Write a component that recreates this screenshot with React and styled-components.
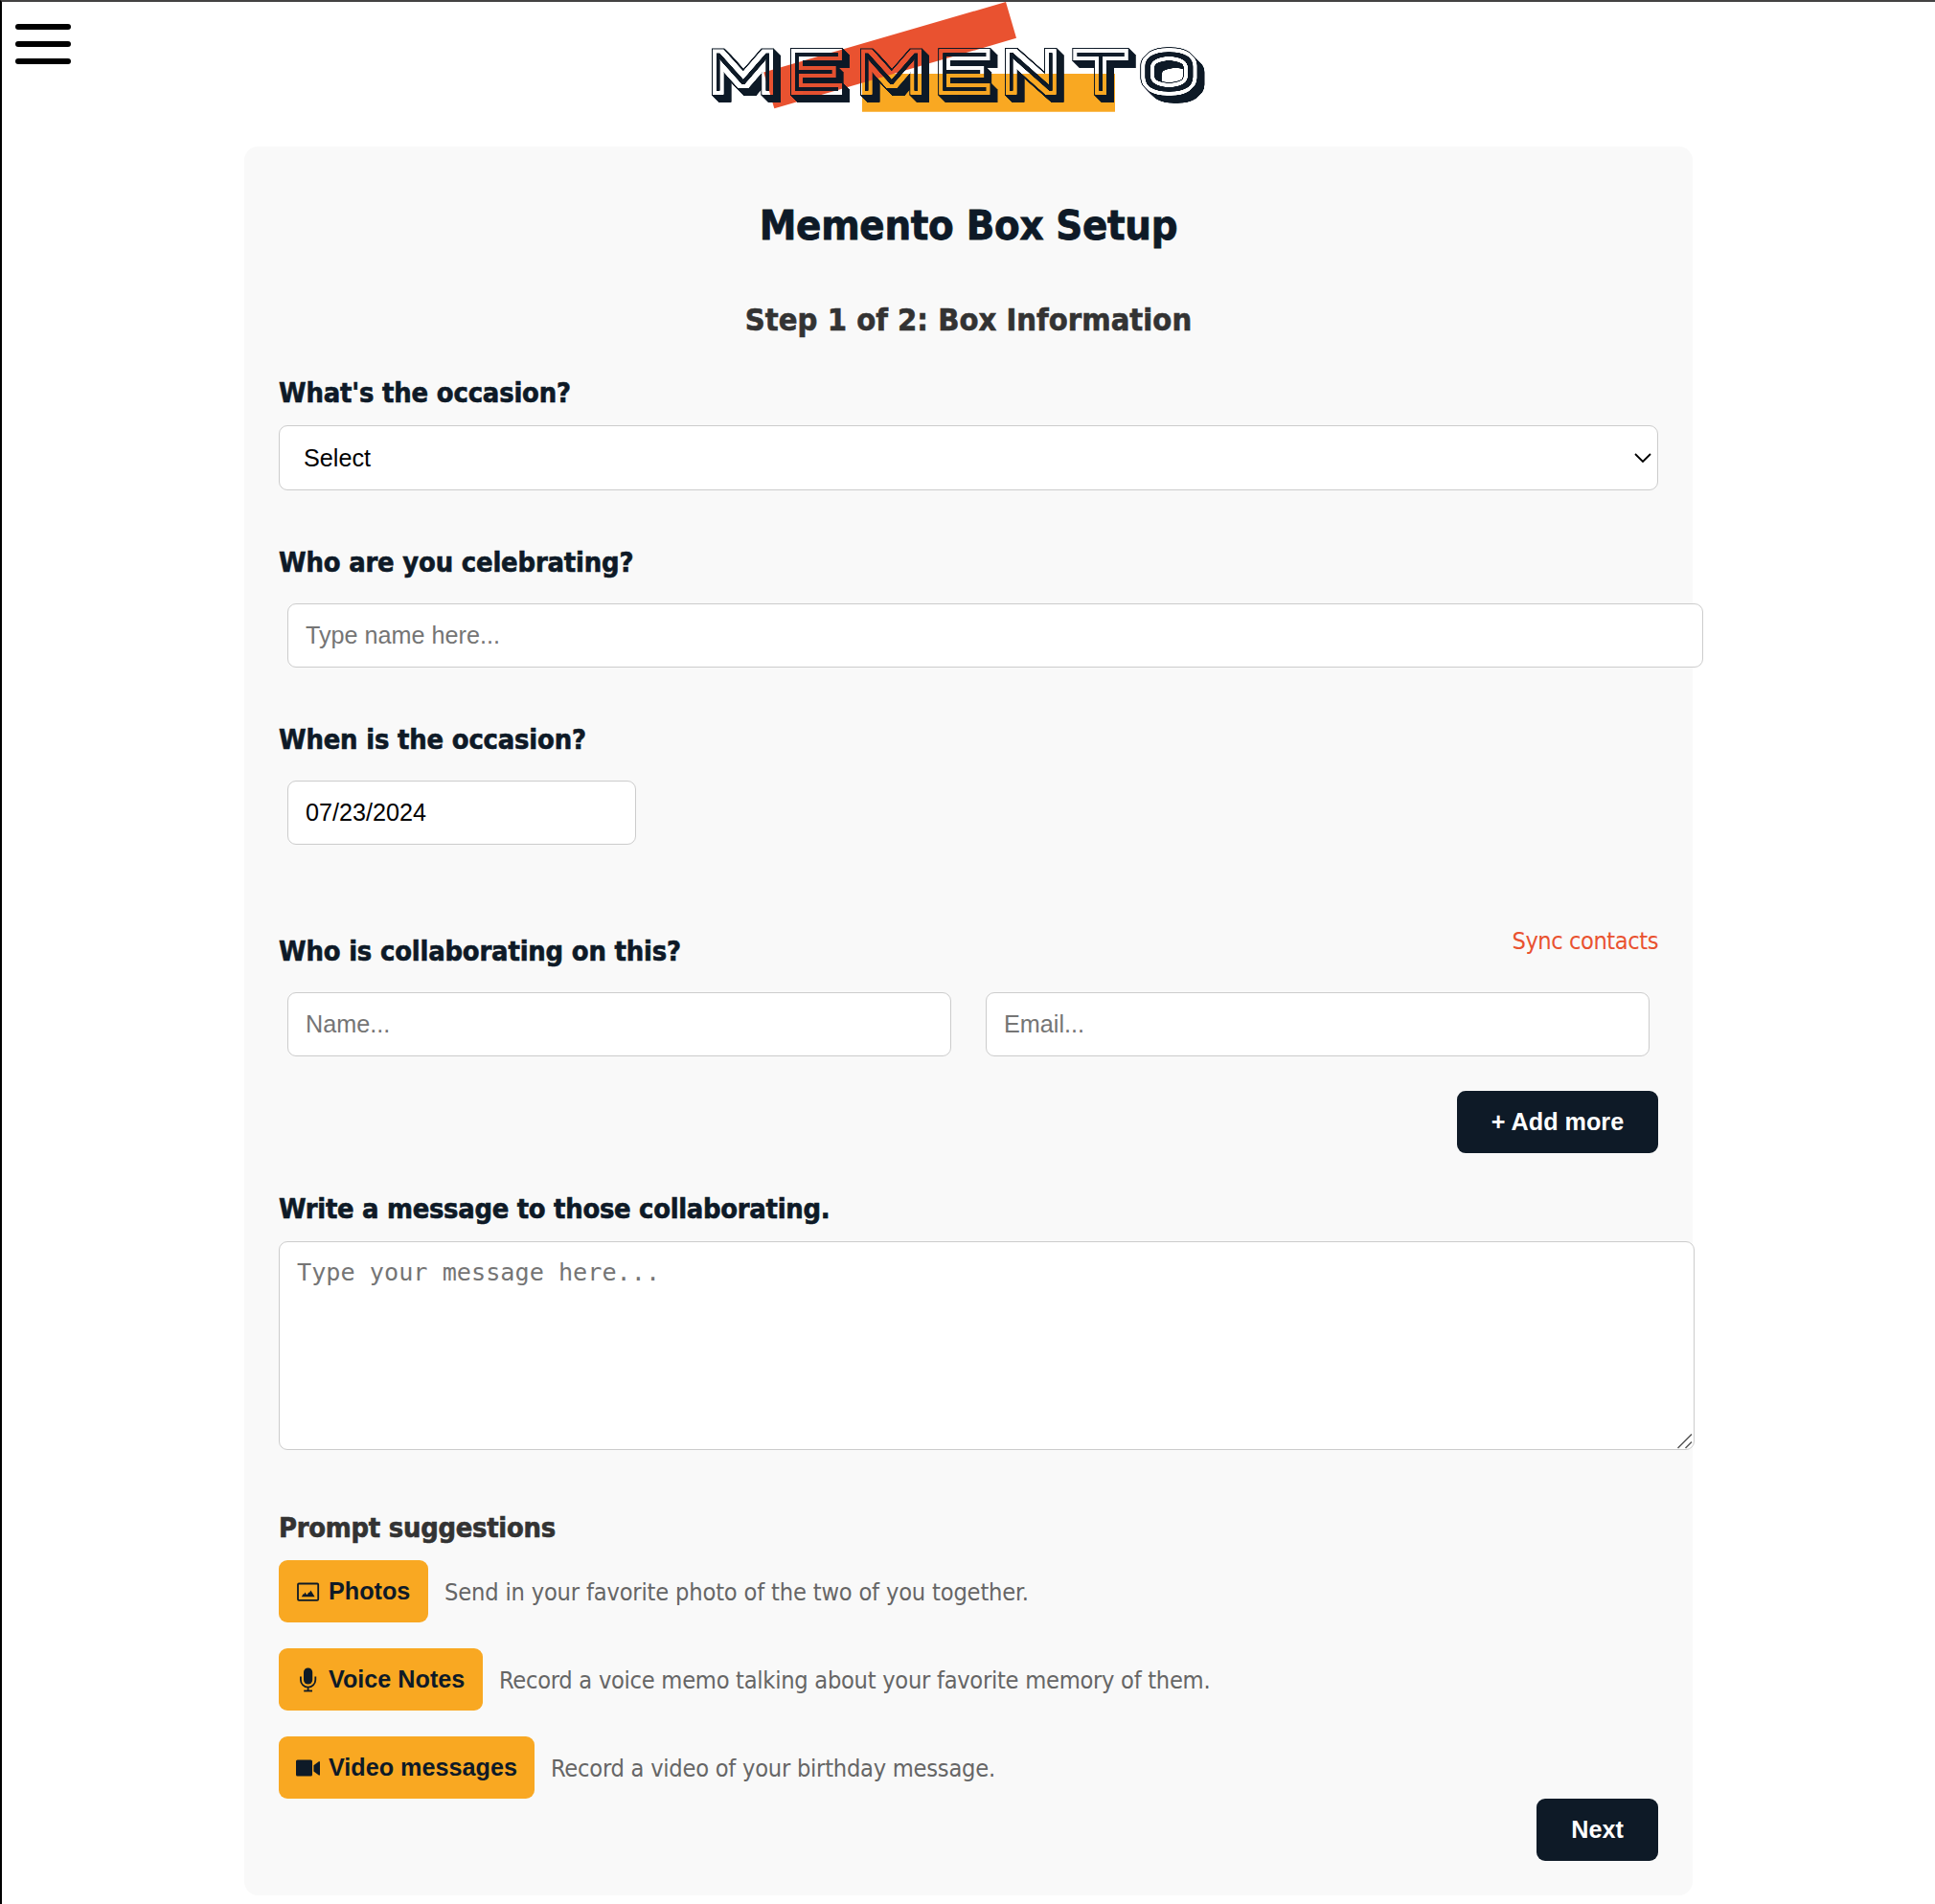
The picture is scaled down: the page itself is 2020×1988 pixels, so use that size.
import React from 'react';
import styled, { createGlobalStyle } from 'styled-components';

const navy = '#0e1a27';
const orange = '#e95230';
const amber = '#f9a822';
const heading = '"DejaVu Sans Condensed", "DejaVu Sans", sans-serif';
const control = '"Liberation Sans", Arial, sans-serif';

const GlobalStyle = createGlobalStyle`
  *, *::before, *::after { box-sizing: border-box; }
  body { margin: 0; background: #fff; font-family: ${heading}; font-stretch: condensed; }
`;

const Page = styled.div`
  min-height: 1988px;
  border-top: 2px solid #444243;
  border-left: 2px solid #000;
`;

const Header = styled.header`
  display: flex;
  align-items: flex-start;
  height: 151px;
  padding-left: 14px;
`;

const MenuButton = styled.button`
  display: flex;
  flex-direction: column;
  gap: 12px;
  width: 58px;
  margin-top: 23px;
  padding: 0;
  border: 0;
  background: none;
`;

const MenuBar = styled.span`
  height: 6px;
  border-radius: 3px;
  background: #000;
`;

const LogoArt = styled.svg`
  display: block;
  width: 540px;
  height: 128px;
  margin-left: 656px;
`;

const Card = styled.main`
  width: 1512px;
  margin: 0 auto;
  padding: 56px 36px 36px;
  border-radius: 14.4px;
  background: #f9f9f9;
`;

const Title = styled.h1`
  margin: 0 0 53px;
  color: ${navy};
  font-size: 43.2px;
  line-height: 52px;
  letter-spacing: -0.3px;
  -webkit-text-stroke: 0.8px;
  text-align: center;
`;

const StepTitle = styled.h2`
  margin: 0 0 38px;
  color: #333;
  font-size: 32.4px;
  line-height: 40px;
  letter-spacing: 0.03px;
  -webkit-text-stroke: 0.6px;
  text-align: center;
`;

const Field = styled.section`
  margin-bottom: ${(p) => p.$after}px;
`;

const Label = styled.label`
  display: block;
  margin: 0 0 ${(p) => p.$gap ?? 25}px;
  color: ${(p) => p.$color ?? navy};
  font-size: 28.8px;
  font-weight: bold;
  line-height: 36px;
  letter-spacing: ${(p) => p.$track ?? -0.17}px;
  -webkit-text-stroke: 0.6px;
`;

const SelectBox = styled.div`
  position: relative;
  height: 68px;
`;

const Select = styled.select`
  appearance: none;
  width: 100%;
  height: 68px;
  padding: 0 25px;
  border: 1px solid #ccc;
  border-radius: 9px;
  background: #fff;
  color: #000;
  font: 25.2px ${control};
`;

const Chevron = styled.svg`
  position: absolute;
  top: 27px;
  right: 6px;
  width: 20px;
  height: 14px;
  pointer-events: none;
`;

const Input = styled.input`
  display: block;
  width: ${(p) => p.$width}px;
  height: 67px;
  margin: 0 9px;
  padding: 0 18px;
  border: 1px solid #ccc;
  border-radius: 9px;
  background: #fff;
  color: #000;
  font: 25.2px ${control};
  &::placeholder { color: #757575; opacity: 1; }
`;

const CollaboratorHead = styled.div`
  display: flex;
  justify-content: space-between;
  align-items: flex-start;
  ${Label} { margin-top: 10px; }
`;

const SyncLink = styled.a`
  color: ${orange};
  font-size: 25.2px;
  line-height: 36px;
  letter-spacing: -0.45px;
`;

const Collaborator = styled.div`
  display: flex;
  gap: 18px;
  margin-bottom: 36px;
`;

const Actions = styled.div`
  display: flex;
  justify-content: flex-end;
`;

const DarkButton = styled.button`
  width: ${(p) => p.$width}px;
  height: 65px;
  padding: 0;
  border: 0;
  border-radius: 9px;
  background: ${navy};
  color: #fff;
  font: bold 25.2px ${control};
`;

const MessageBox = styled.div`
  position: relative;
  width: 1478px;
  height: 218px;
`;

const Message = styled.textarea`
  display: block;
  width: 100%;
  height: 100%;
  padding: 17px 18px;
  border: 1px solid #ccc;
  border-radius: 9px;
  background: #fff;
  resize: none;
  font: 25.2px/30px "DejaVu Sans Mono", monospace;
  &::placeholder { color: #757575; opacity: 1; }
`;

const Grip = styled.svg`
  position: absolute;
  right: 2px;
  bottom: 1px;
  width: 16px;
  height: 16px;
`;

const Prompts = styled.div`
  display: flex;
  flex-direction: column;
  gap: 27px;
`;

const Prompt = styled.div`
  display: flex;
  gap: 17px;
`;

const PromptButton = styled.button`
  display: flex;
  align-items: center;
  gap: 9px;
  width: ${(p) => p.$width}px;
  height: 65px;
  padding: 0 0 0 18px;
  border: 0;
  border-radius: 9px;
  background: ${amber};
  color: ${navy};
  font: bold 25.2px ${control};
  white-space: nowrap;
`;

const PromptIcon = styled.svg`
  flex: none;
  width: 25px;
  height: 26px;
`;

const PromptText = styled.p`
  margin: 0;
  padding-top: 16px;
  color: #666;
  font-size: 25.2px;
  line-height: 36px;
  letter-spacing: ${(p) => p.$track}px;
`;

const letters = [
  ['M', 740.3, 70.5],
  ['E', 819.1, 61],
  ['M', 895.3, 70.5],
  ['E', 973.5, 61],
  ['N', 1046.1, 60.7],
  ['T', 1124.1, 50.1],
];

/* Grows the hairline source by each [rx, ry] box and merges the results. */
const Grow = ({ name, boxes }) => (
  <>
    {boxes.map((b) => (
      <feMorphology key={b} in="hair" operator="dilate" radius={b} result={`${name}-${b}`} />
    ))}
    <feMerge result={name}>
      {boxes.map((b) => (
        <feMergeNode key={b} in={`${name}-${b}`} />
      ))}
    </feMerge>
  </>
);

const InlineShadow = ({ id, band, face }) => (
  <filter id={id} filterUnits="userSpaceOnUse" x="730" y="30" width="540" height="95" colorInterpolationFilters="sRGB">
    <feComponentTransfer in="SourceGraphic" result="thin">
      <feFuncA type="linear" slope="2" intercept="0" />
    </feComponentTransfer>
    <feOffset in="thin" dx="0" dy="1" result="thin2" />
    <feMerge result="hair"><feMergeNode in="thin" /><feMergeNode in="thin2" /></feMerge>
    <feMorphology in="hair" operator="dilate" radius="1" result="core" />
    <Grow name="band" boxes={band} />
    <Grow name="face" boxes={face} />
    <feOffset in="face" dx="1" dy="1" result="s1" />
    <feMerge result="m1"><feMergeNode in="face" /><feMergeNode in="s1" /></feMerge>
    <feOffset in="m1" dx="2" dy="2" result="s2" />
    <feMerge result="m2"><feMergeNode in="m1" /><feMergeNode in="s2" /></feMerge>
    <feOffset in="m2" dx="4" dy="4" result="s3" />
    <feMerge result="solid"><feMergeNode in="m2" /><feMergeNode in="s3" /></feMerge>
    <feComposite in="solid" in2="band" operator="out" result="shell" />
    <feMerge><feMergeNode in="shell" /><feMergeNode in="core" /></feMerge>
  </filter>
);

function Logo() {
  return (
    <LogoArt viewBox="730 2 540 128" role="img" aria-label="Memento">
      <defs>
        <InlineShadow id="inline-square" band={['5 5']} face={['6 6']} />
        <InlineShadow
          id="inline-round"
          band={['5 2', '4 3', '3 4', '2 5']}
          face={['6 2', '5 3', '4 4', '3 5', '2 6']}
        />
      </defs>
      <polygon points="900,77 1164,77 1164,116.7 900,116.7" fill={amber} />
      <polygon points="1050,2 1061,39.8 808.3,113.3 797.2,75.6" fill={orange} />
      <g filter="url(#inline-square)">
        <text y="93" fontFamily="Lato, sans-serif" fontWeight="100" fontSize="52.8" fill={navy}>
          {letters.map(([ch, x, w], i) => (
            <tspan key={i} x={x} textLength={w} lengthAdjust="spacingAndGlyphs">{ch}</tspan>
          ))}
        </text>
      </g>
      <g filter="url(#inline-round)">
        <text x="1189.4" y="93" textLength="61.8" lengthAdjust="spacingAndGlyphs" fontFamily="Roboto, sans-serif" fontWeight="100" fontSize="52.4" fill={navy}>O</text>
      </g>
    </LogoArt>
  );
}

const PhotoIcon = () => (
  <PromptIcon viewBox="0 0 25 26">
    <rect x="2" y="4.5" width="21.2" height="17.3" rx="1" fill="none" stroke={navy} strokeWidth="1.8" />
    <path d="M5.8 18.2 L7.6 15.2 L8.5 15.6 L9.4 13.4 L11 16 L12.2 15.6 L13.2 13.6 L14 14 L15.4 11.6 L19.6 18.2 Z" fill={navy} />
  </PromptIcon>
);

const MicIcon = () => (
  <PromptIcon viewBox="0 0 25 26">
    <rect x="8" y="0.5" width="9.2" height="17" rx="4.6" fill={navy} />
    <path d="M4.9 9.5 V12.9 A7.7 7.7 0 0 0 20.3 12.9 V9.5 M12.6 20 V24.5" fill="none" stroke={navy} strokeWidth="1.8" />
    <path d="M8.2 23.6 H17 V25.4 H8.2 Z" fill={navy} />
  </PromptIcon>
);

const VideoIcon = () => (
  <PromptIcon viewBox="0 0 25 26">
    <rect x="0" y="4.5" width="17" height="17" rx="1.6" fill={navy} />
    <path d="M25 6.2 V20.5 H23.8 L18.4 16.4 V10.2 L23.8 6.2 Z" fill={navy} />
  </PromptIcon>
);

const prompts = [
  { name: 'Photos', width: 156, Icon: PhotoIcon, track: -0.18, text: 'Send in your favorite photo of the two of you together.' },
  { name: 'Voice Notes', width: 213, Icon: MicIcon, track: -0.28, text: 'Record a voice memo talking about your favorite memory of them.' },
  { name: 'Video messages', width: 267, Icon: VideoIcon, track: -0.25, text: 'Record a video of your birthday message.' },
];

export default function App() {
  return (
    <Page>
      <GlobalStyle />
      <Header>
        <MenuButton aria-label="Menu">
          <MenuBar />
          <MenuBar />
          <MenuBar />
        </MenuButton>
        <Logo />
      </Header>
      <Card>
        <Title>Memento Box Setup</Title>
        <StepTitle>Step 1 of 2: Box Information</StepTitle>
        <Field $after={57}>
          <Label $gap={16}>What's the occasion?</Label>
          <SelectBox>
            <Select defaultValue="">
              <option value="">Select</option>
            </Select>
            <Chevron viewBox="0 0 20 14">
              <path d="M2 3 L10 11 L18 3" fill="none" stroke="#000" strokeWidth="1.8" />
            </Chevron>
          </SelectBox>
        </Field>
        <Field $after={57}>
          <Label>Who are you celebrating?</Label>
          <Input $width={1478} placeholder="Type name here..." />
        </Field>
        <Field $after={83}>
          <Label>When is the occasion?</Label>
          <Input $width={364} defaultValue="07/23/2024" />
        </Field>
        <Field $after={40}>
          <CollaboratorHead>
            <Label>Who is collaborating on this?</Label>
            <SyncLink>Sync contacts</SyncLink>
          </CollaboratorHead>
          <Collaborator>
            <Input $width={693} placeholder="Name..." />
            <Input $width={693} placeholder="Email..." />
          </Collaborator>
          <Actions>
            <DarkButton $width={210}>+ Add more</DarkButton>
          </Actions>
        </Field>
        <Field $after={63}>
          <Label $gap={16} $track={-0.28}>Write a message to those collaborating.</Label>
          <MessageBox>
            <Message placeholder="Type your message here..." />
            <Grip viewBox="0 0 16 16">
              <path d="M0.5 15 L15 0.5 M8.5 15 L15 8.5" stroke="#555" strokeWidth="1.5" />
            </Grip>
          </MessageBox>
        </Field>
        <Label as="h3" $gap={16} $color="#333" $track={-0.25}>Prompt suggestions</Label>
        <Prompts>
          {prompts.map(({ name, width, Icon, track, text }) => (
            <Prompt key={name}>
              <PromptButton $width={width}><Icon />{name}</PromptButton>
              <PromptText $track={track}>{text}</PromptText>
            </Prompt>
          ))}
        </Prompts>
        <Actions>
          <DarkButton $width={127}>Next</DarkButton>
        </Actions>
      </Card>
    </Page>
  );
}
